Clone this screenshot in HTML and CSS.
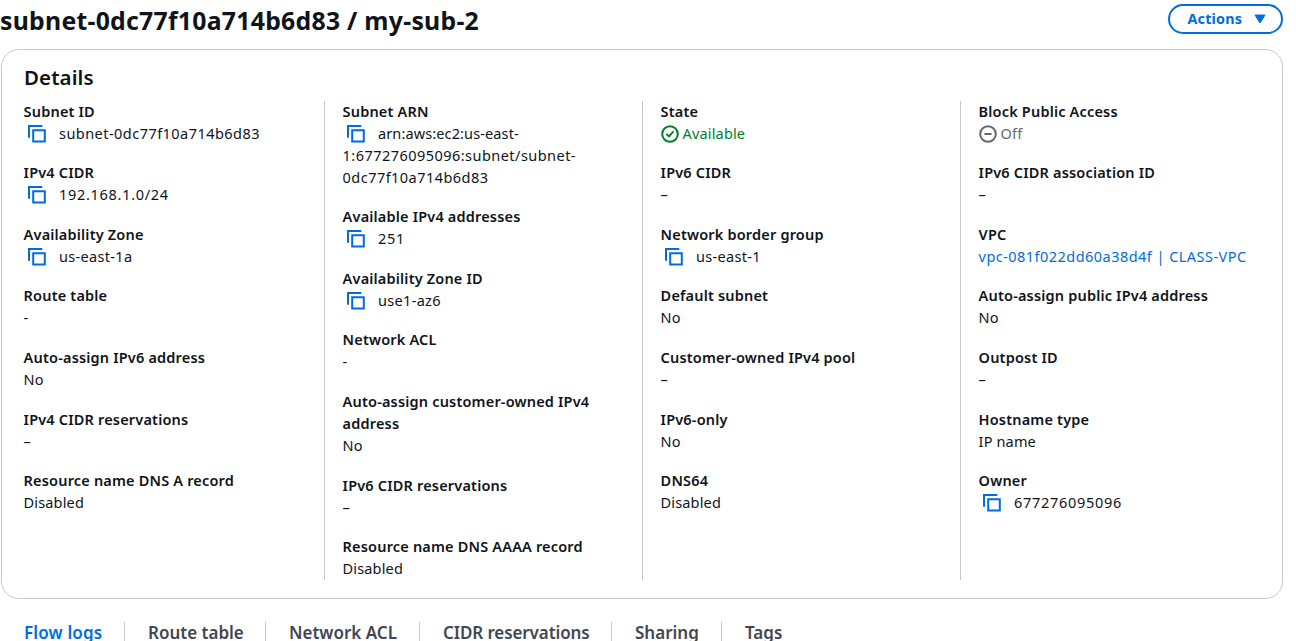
FILE: index.html
```
<!DOCTYPE html>
<html lang="en">
<head>
<meta charset="utf-8">
<title>Subnet details</title>
<link rel="stylesheet" href="styles.css">
</head>
<body>
<svg width="0" height="0" class="sprite" aria-hidden="true">
  <symbol id="copy" viewBox="0 0 18 18"><path d="M1 12.8V1h13.3M5.2 5.2h11.6v11.4H5.2z"/></symbol>
  <symbol id="check" viewBox="0 0 18 18"><circle cx="9" cy="9" r="7.8"/><path d="M5.4 9l2.6 2.4 4.4-5"/></symbol>
  <symbol id="minus" viewBox="0 0 18 18"><circle cx="9" cy="9" r="7.8"/><path d="M5.4 9h7.2"/></symbol>
</svg>
<header class="page-header">
  <h1 class="title">subnet-0dc77f10a714b6d83 / my-sub-2</h1>
  <button class="actions">Actions <svg class="caret" viewBox="0 0 12 10"><path d="M1 1h10L6 9z"/></svg></button>
</header>
<main class="card">
  <h2 class="card-title">Details</h2>
  <div class="columns">
    <dl class="column">
      <div><dt>Subnet ID</dt><dd class="id"><svg class="copy"><use href="#copy"/></svg>subnet-0dc77f10a714b6d83</dd></div>
      <div><dt>IPv4 CIDR</dt><dd class="num"><svg class="copy"><use href="#copy"/></svg>192.168.1.0/24</dd></div>
      <div><dt>Availability Zone</dt><dd class="zone"><svg class="copy"><use href="#copy"/></svg>us-east-1a</dd></div>
      <div><dt>Route table</dt><dd>-</dd></div>
      <div><dt>Auto-assign IPv6 address</dt><dd>No</dd></div>
      <div><dt>IPv4 CIDR reservations</dt><dd>–</dd></div>
      <div><dt>Resource name DNS A record</dt><dd>Disabled</dd></div>
    </dl>
    <dl class="column">
      <div><dt>Subnet ARN</dt><dd class="id"><svg class="copy"><use href="#copy"/></svg><span class="arn-start">arn:aws:ec2:us-east-</span><br>1:677276095096:subnet/subnet-<br>0dc77f10a714b6d83</dd></div>
      <div><dt>Available IPv4 addresses</dt><dd class="num"><svg class="copy"><use href="#copy"/></svg>251</dd></div>
      <div><dt>Availability Zone ID</dt><dd class="zone"><svg class="copy"><use href="#copy"/></svg>use1-az6</dd></div>
      <div><dt>Network ACL</dt><dd>-</dd></div>
      <div><dt>Auto-assign customer-owned IPv4<br>address</dt><dd>No</dd></div>
      <div><dt>IPv6 CIDR reservations</dt><dd>–</dd></div>
      <div><dt>Resource name DNS AAAA record</dt><dd>Disabled</dd></div>
    </dl>
    <dl class="column">
      <div><dt>State</dt><dd class="ok"><svg class="status"><use href="#check"/></svg>Available</dd></div>
      <div><dt>IPv6 CIDR</dt><dd>–</dd></div>
      <div><dt>Network border group</dt><dd class="zone"><svg class="copy"><use href="#copy"/></svg>us-east-1</dd></div>
      <div><dt>Default subnet</dt><dd>No</dd></div>
      <div><dt>Customer-owned IPv4 pool</dt><dd>–</dd></div>
      <div><dt>IPv6-only</dt><dd>No</dd></div>
      <div><dt>DNS64</dt><dd>Disabled</dd></div>
    </dl>
    <dl class="column">
      <div><dt>Block Public Access</dt><dd class="off"><svg class="status"><use href="#minus"/></svg>Off</dd></div>
      <div><dt>IPv6 CIDR association ID</dt><dd>–</dd></div>
      <div><dt>VPC</dt><dd class="id"><a class="link">vpc-081f022dd60a38d4f | CLASS-VPC</a></dd></div>
      <div><dt>Auto-assign public IPv4 address</dt><dd>No</dd></div>
      <div><dt>Outpost ID</dt><dd>–</dd></div>
      <div><dt>Hostname type</dt><dd>IP name</dd></div>
      <div><dt>Owner</dt><dd class="num"><svg class="copy"><use href="#copy"/></svg>677276095096</dd></div>
    </dl>
  </div>
</main>
<nav class="tabs">
  <a class="tab active">Flow logs</a>
  <a class="tab">Route table</a>
  <a class="tab">Network ACL</a>
  <a class="tab">CIDR reservations</a>
  <a class="tab">Sharing</a>
  <a class="tab">Tags</a>
</nav>
</body>
</html>
```
FILE: styles.css
```
* { box-sizing: border-box; }
html, body { height: 641px; overflow: hidden; }
body {
  margin: 0;
  background: #fff;
  color: #0f141a;
  font: 14.5px/22px "Noto Sans", "Open Sans", sans-serif;
}
h1, h2, dl, dd { margin: 0; }
.sprite { position: absolute; }
.page-header {
  display: flex;
  justify-content: space-between;
  align-items: flex-start;
  width: 1283px;
  height: 49px;
  padding-top: 4px;
}
.title {
  font-size: 24.8px;
  line-height: 32px;
  font-weight: 700;
  letter-spacing: 0.26px;
  white-space: nowrap;
}
.actions {
  display: flex;
  align-items: center;
  justify-content: space-between;
  width: 115px;
  height: 30px;
  padding: 0 15px 0 17.5px;
  border: 2px solid #006ce0;
  border-radius: 15px;
  background: #fff;
  color: #006ce0;
  font: 700 14.3px/22px "Noto Sans", sans-serif;
  letter-spacing: 0.2px;
}
.caret { width: 12px; height: 10px; margin-bottom: 1px; fill: #006ce0; stroke: #006ce0; stroke-linejoin: round; }
.card {
  width: 1282px;
  height: 550px;
  margin-left: 1px;
  padding: 14px 22px 0;
  border: 1px solid #c6c6cd;
  border-radius: 17.6px;
}
.card-title { font-size: 20.5px; line-height: 26px; font-weight: 600; letter-spacing: 0.1px; }
.columns { display: grid; grid-template-columns: 300px 318px 318px 300px; margin-top: 11px; height: 479px; }
.column { display: flex; flex-direction: column; gap: 17.6px; margin-left: -0.4px; }
.column > div:first-child { margin-top: -1.4px; }
.column + .column { margin-left: 0; padding-left: 17.6px; border-left: 1px solid #c6c6cd; }
dt { font-weight: 600; letter-spacing: 0.18px; white-space: nowrap; }
dd { letter-spacing: 0.15px; white-space: nowrap; }
.id { letter-spacing: 0.46px; }
.zone { letter-spacing: 0.32px; }
.arn-start { letter-spacing: 0.12px; }
.num { letter-spacing: 0.7px; }
.copy { width: 18px; height: 18px; margin: 0 13.4px 0 4px; vertical-align: -4px; fill: none; stroke: #006ce0; stroke-width: 2; }
.status { width: 18px; height: 18px; margin-right: 4px; vertical-align: -4px; fill: none; stroke: currentColor; stroke-width: 2; }
.ok { color: #00802f; }
.off { color: #656871; }
.link { color: #006ce0; }
.tabs { display: grid; grid-template-columns: 102px 141px 154px 192px 110px 100px; margin: 23px 0 0 23px; height: 19px; }
.tab { height: 19px; padding: 3px 0 0 23px; border-right: 1px solid #c6c6cd; color: #424650; font-size: 17px; line-height: 16px; font-weight: 600; white-space: nowrap; }
.tab:first-child { padding-left: 1px; letter-spacing: 0.15px; }
.tab:nth-child(4) { letter-spacing: -0.1px; }
.tab:last-child { border-right: 0; }
.active { color: #006ce0; }
```
